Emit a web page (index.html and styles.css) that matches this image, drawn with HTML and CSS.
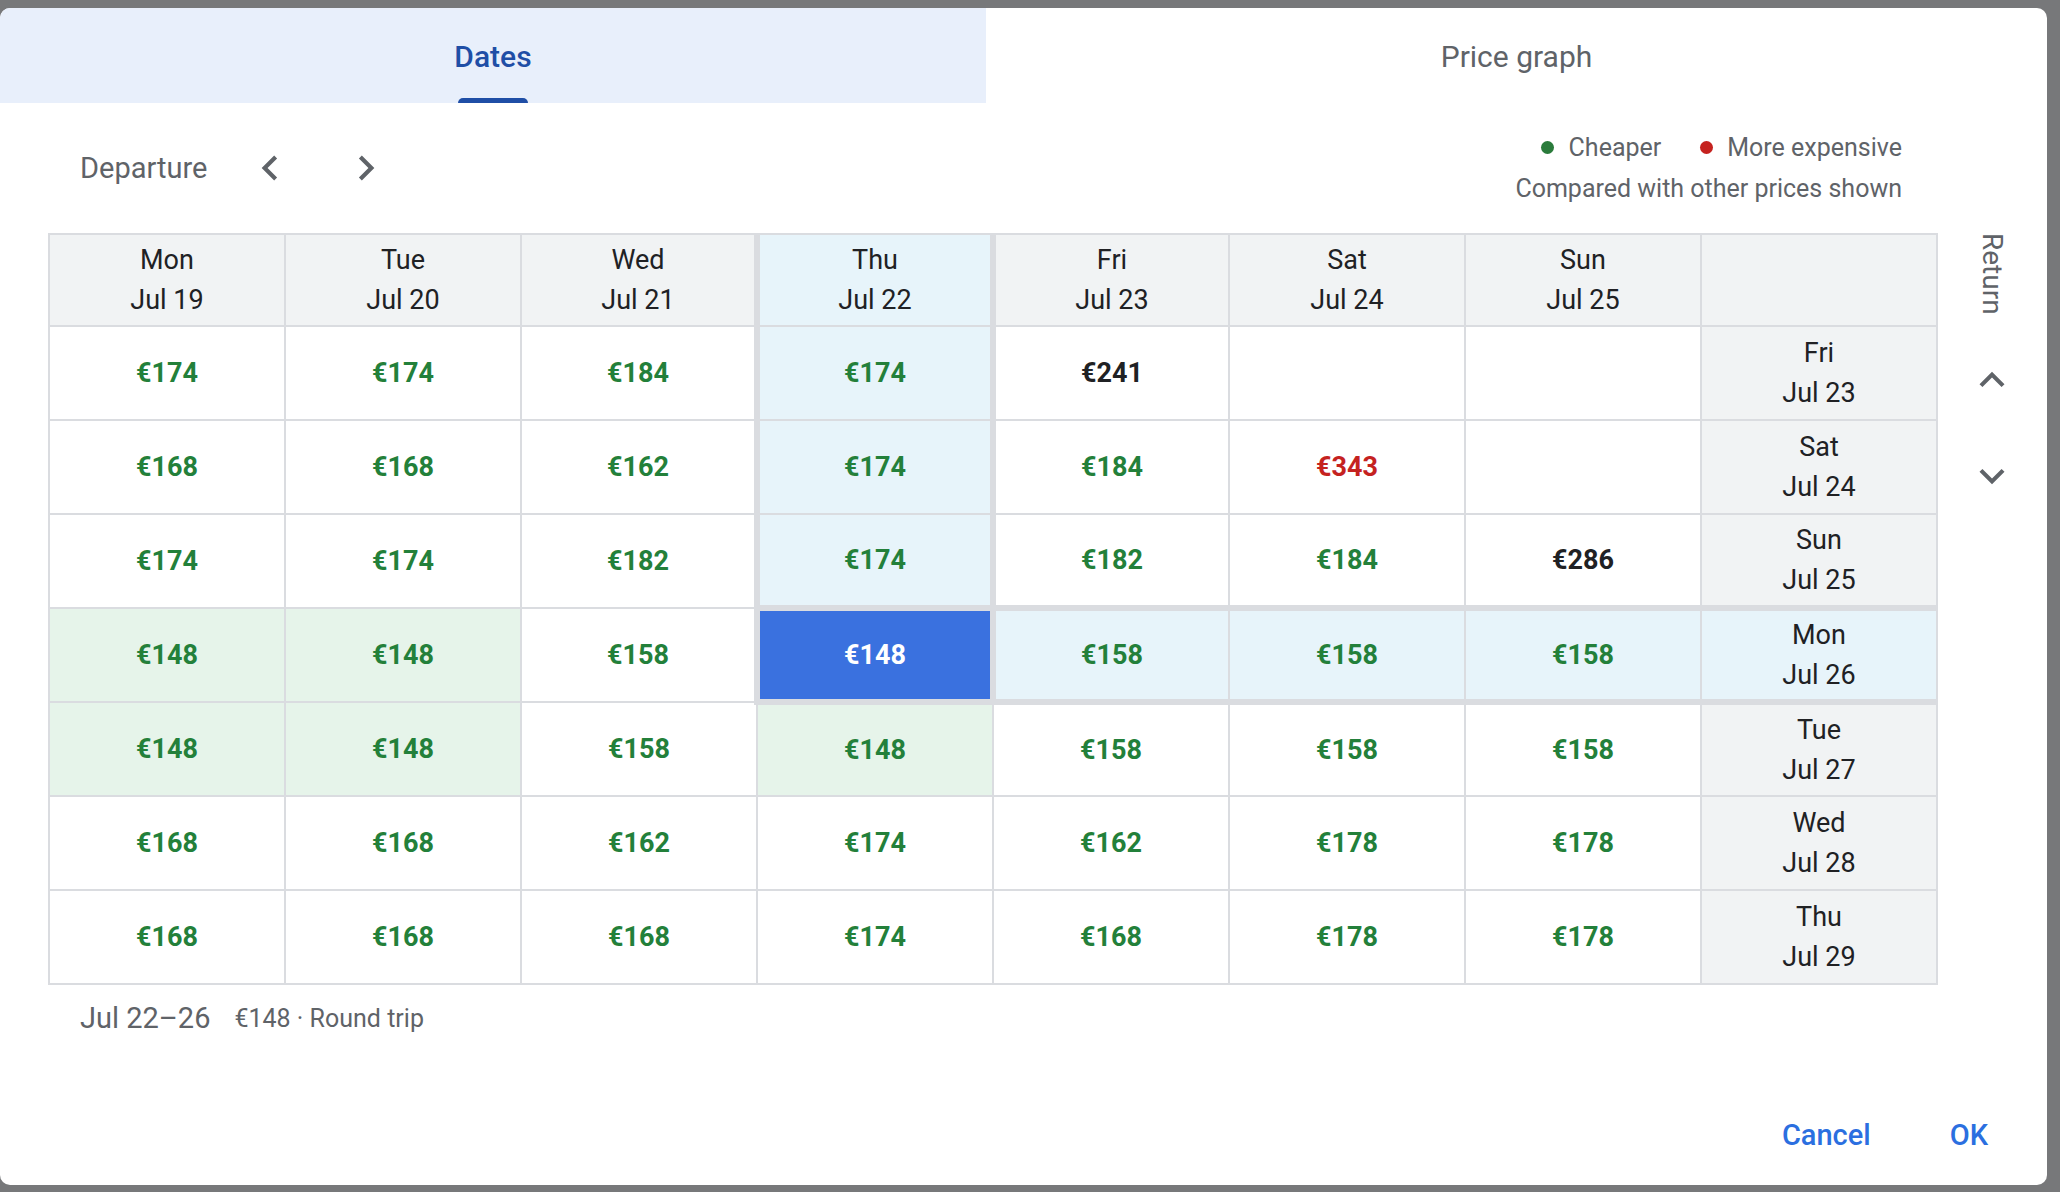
FILE: index.html
```html
<!DOCTYPE html>
<html lang="en">
<head>
<meta charset="utf-8">
<title>Dates</title>
<link rel="stylesheet" href="styles.css">
</head>
<body>
<div class="dialog">
  <div class="tabs">
    <div class="tab tab-active">Dates<span class="indicator"></span></div>
    <div class="tab tab-other">Price graph</div>
  </div>
  <div class="content">
    <div class="main">
      <div class="toolbar">
        <div class="dep">
          <span class="dep-label">Departure</span>
          <button class="icon-btn" aria-label="Previous">
            <svg viewBox="0 0 24 24" width="50" height="50"><path d="M15.41 7.41L14 6l-6 6 6 6 1.41-1.41L10.83 12z"/></svg>
          </button>
          <button class="icon-btn" aria-label="Next">
            <svg viewBox="0 0 24 24" width="50" height="50"><path d="M10 6L8.59 7.41 13.17 12l-4.58 4.59L10 18l6-6z"/></svg>
          </button>
        </div>
        <div class="legend">
          <div class="legend-row">
            <span class="dot dot-green"></span><span class="legend-text">Cheaper</span>
            <span class="dot dot-red"></span><span class="legend-text">More expensive</span>
          </div>
          <div class="legend-note">Compared with other prices shown</div>
        </div>
      </div>

      <table class="grid">
        <colgroup>
          <col><col><col><col><col><col><col><col>
        </colgroup>
        <thead>
          <tr>
            <th class="hd">Mon<br>Jul 19</th>
            <th class="hd">Tue<br>Jul 20</th>
            <th class="hd">Wed<br>Jul 21</th>
            <th class="hd hl vx">Thu<br>Jul 22</th>
            <th class="hd">Fri<br>Jul 23</th>
            <th class="hd">Sat<br>Jul 24</th>
            <th class="hd">Sun<br>Jul 25</th>
            <th class="hd"></th>
          </tr>
        </thead>
        <tbody>
          <tr>
            <td class="p g">€174</td>
            <td class="p g">€174</td>
            <td class="p g">€184</td>
            <td class="p g hl vx">€174</td>
            <td class="p k">€241</td>
            <td class="p"></td>
            <td class="p"></td>
            <td class="ret">Fri<br>Jul 23</td>
          </tr>
          <tr>
            <td class="p g">€168</td>
            <td class="p g">€168</td>
            <td class="p g">€162</td>
            <td class="p g hl vx">€174</td>
            <td class="p g">€184</td>
            <td class="p r">€343</td>
            <td class="p"></td>
            <td class="ret">Sat<br>Jul 24</td>
          </tr>
          <tr>
            <td class="p g">€174</td>
            <td class="p g">€174</td>
            <td class="p g">€182</td>
            <td class="p g hl vx">€174</td>
            <td class="p g">€182</td>
            <td class="p g">€184</td>
            <td class="p k">€286</td>
            <td class="ret">Sun<br>Jul 25</td>
          </tr>
          <tr>
            <td class="p g gbg">€148</td>
            <td class="p g gbg">€148</td>
            <td class="p g">€158</td>
            <td class="p sel vx hx">€148</td>
            <td class="p g hl hx">€158</td>
            <td class="p g hl hx">€158</td>
            <td class="p g hl hx">€158</td>
            <td class="ret hl hx">Mon<br>Jul 26</td>
          </tr>
          <tr>
            <td class="p g gbg">€148</td>
            <td class="p g gbg">€148</td>
            <td class="p g">€158</td>
            <td class="p g gbg">€148</td>
            <td class="p g">€158</td>
            <td class="p g">€158</td>
            <td class="p g">€158</td>
            <td class="ret">Tue<br>Jul 27</td>
          </tr>
          <tr>
            <td class="p g">€168</td>
            <td class="p g">€168</td>
            <td class="p g">€162</td>
            <td class="p g">€174</td>
            <td class="p g">€162</td>
            <td class="p g">€178</td>
            <td class="p g">€178</td>
            <td class="ret">Wed<br>Jul 28</td>
          </tr>
          <tr>
            <td class="p g">€168</td>
            <td class="p g">€168</td>
            <td class="p g">€168</td>
            <td class="p g">€174</td>
            <td class="p g">€168</td>
            <td class="p g">€178</td>
            <td class="p g">€178</td>
            <td class="ret">Thu<br>Jul 29</td>
          </tr>
        </tbody>
      </table>

      <div class="summary">
        <span class="sum-dates">Jul 22–26</span>
        <span class="sum-price">€148 · Round trip</span>
      </div>
    </div>

    <div class="side">
      <div class="return-label">Return</div>
      <button class="icon-btn side-btn" aria-label="Earlier">
        <svg viewBox="0 0 24 24" width="50" height="50"><path d="M12 8l-6 6 1.41 1.41L12 10.83l4.59 4.58L18 14z"/></svg>
      </button>
      <button class="icon-btn side-btn" aria-label="Later">
        <svg viewBox="0 0 24 24" width="50" height="50"><path d="M16.59 8.59L12 13.17 7.41 8.59 6 10l6 6 6-6z"/></svg>
      </button>
    </div>
  </div>

  <div class="actions">
    <button class="text-btn">Cancel</button>
    <button class="text-btn">OK</button>
  </div>
</div>
</body>
</html>
```

FILE: styles.css
```css
* {
  box-sizing: border-box;
}

html, body {
  margin: 0;
  padding: 0;
}

body {
  background: #77787a;
  width: 2060px;
  height: 1192px;
  overflow: hidden;
  font-family: Roboto, "Liberation Sans", Arial, sans-serif;
  color: #202124;
}

.dialog {
  margin-top: 8px;
  width: 2047px;
  height: 1177px;
  background: #ffffff;
  border-radius: 10px;
  overflow: hidden;
  display: flex;
  flex-direction: column;
}

/* Tabs */
.tabs {
  display: flex;
  height: 95px;
  flex: none;
}

.tab {
  position: relative;
  display: flex;
  align-items: center;
  justify-content: center;
  font-size: 30px;
  font-weight: 500;
  padding-top: 2px;
}

.tab-active {
  width: 986px;
  background: #e8effb;
  color: #1f4ea6;
}

.tab-other {
  flex: 1;
  color: #5f6368;
  font-weight: 400;
}

.indicator {
  position: absolute;
  left: 458px;
  bottom: 0;
  width: 70px;
  height: 5px;
  background: #1f4ea6;
  border-radius: 5px 5px 0 0;
}

/* Content */
.content {
  display: flex;
  flex: none;
}

.main {
  width: 1936px;
  padding-left: 48px;
  display: flex;
  flex-direction: column;
}

.toolbar {
  height: 130px;
  display: flex;
  align-items: center;
  justify-content: space-between;
  padding-left: 32px;
  padding-right: 34px;
}

.dep {
  display: flex;
  align-items: center;
}

.dep-label {
  font-size: 29px;
  color: #5f6368;
  margin-right: 15px;
}

.icon-btn {
  width: 96px;
  height: 96px;
  border: 0;
  padding: 0;
  margin: 0;
  background: transparent;
  display: flex;
  align-items: center;
  justify-content: center;
}

.icon-btn svg {
  fill: #5f6368;
  display: block;
}

.legend {
  display: flex;
  flex-direction: column;
  align-items: flex-end;
  font-size: 25px;
  line-height: 41px;
  color: #5f6368;
}

.legend-row {
  display: flex;
  align-items: center;
}

.dot {
  width: 13px;
  height: 13px;
  border-radius: 50%;
  margin-right: 15px;
}

.dot-green {
  background: #2a7b3b;
}

.dot-red {
  background: #c5221f;
  margin-left: 39px;
  margin-right: 14px;
}

/* Grid */
.grid {
  border-collapse: collapse;
  table-layout: fixed;
  width: 1888px;
}

.grid col {
  width: 236px;
}

.grid th,
.grid td {
  border: 2px solid #dadce0;
  padding: 0;
  text-align: center;
  vertical-align: middle;
}

.grid th {
  height: 92px;
  background: #f1f3f4;
  font-weight: 400;
  font-size: 27px;
  line-height: 40px;
  color: #202124;
}

.grid td {
  height: 94px;
}

.p {
  font-size: 27px;
  font-weight: 700;
  background: #ffffff;
}

.g { color: #23803a; }
.r { color: #c5221f; }
.k { color: #202124; }

.gbg { background: #e6f4ea; }

.grid .hl { background: #e7f4fa; }

.grid .sel {
  background: #3a71df;
  color: #ffffff;
}

.ret {
  background: #f1f3f4;
  font-size: 27px;
  line-height: 40px;
  color: #202124;
}

.grid .vx {
  border-left-width: 6px;
  border-right-width: 6px;
}

.grid .hx {
  border-top-width: 6px;
  border-bottom-width: 6px;
}

/* Summary */
.summary {
  height: 66px;
  display: flex;
  align-items: center;
  padding-left: 32px;
  color: #5f6368;
}

.sum-dates {
  font-size: 29px;
  margin-right: 24px;
}

.sum-price {
  font-size: 25px;
}

/* Side */
.side {
  width: 111px;
  padding-top: 130px;
  display: flex;
  flex-direction: column;
  align-items: center;
}

.return-label {
  writing-mode: vertical-rl;
  font-size: 28px;
  color: #5f6368;
  line-height: 24px;
  height: 82px;
  margin-bottom: 17px;
}

.side-btn {
  margin-left: 1px;
}

/* Actions */
.actions {
  margin-top: auto;
  height: 100px;
  display: flex;
  align-items: center;
  justify-content: flex-end;
  gap: 79px;
  padding-right: 59px;
  flex: none;
}

.text-btn {
  border: 0;
  background: transparent;
  padding: 0;
  font-family: Roboto, "Liberation Sans", Arial, sans-serif;
  font-size: 29px;
  font-weight: 500;
  color: #2b6fe0;
}
```
